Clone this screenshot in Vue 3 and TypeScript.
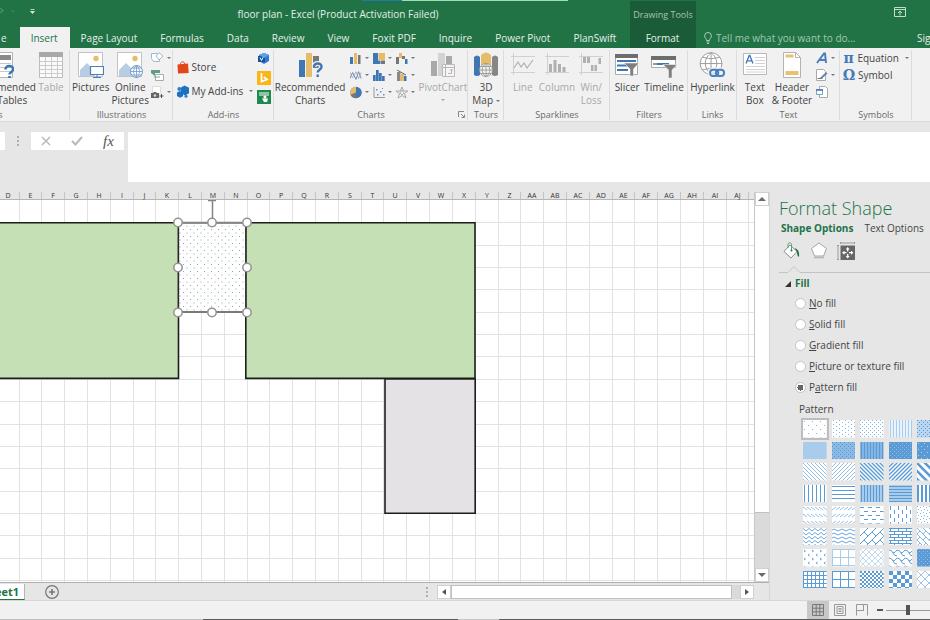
<script setup lang="ts">
import { ref } from 'vue'

interface Swatch {
  name: string
  w: number
  h: number
  d?: string
  fill?: string
  bg?: string
  sw?: number
  ink?: string
}

const tabs: string[] = ['Page Layout', 'Formulas', 'Data', 'Review', 'View', 'Foxit PDF', 'Inquire', 'Power Pivot', 'PlanSwift']

// Sheet geometry: column and row edges snapped to whole pixels
const columnNames: string[] = [
  ...'DEFGHIJKLMNOPQRSTUVWXYZ'.split(''),
  ...'ABCDEFGHIJ'.split('').map((c) => 'A' + c),
]
const edge = (i: number): number => Math.round(-3.3 + i * 22.81)
const columns = columnNames.map((name, i) => ({ name, width: edge(i + 1) - edge(i), right: edge(i + 1) }))
const rowLines: number[] = Array.from({ length: 17 }, (_, i) => Math.round(22.3 + i * 22.36))
const handles: number[][] = [[178, 22], [212, 22], [247, 22], [178, 67], [247, 67], [178, 112], [212, 112], [247, 112]]

const fills = [
  { id: 'none', pre: '', key: 'N', rest: 'o fill' },
  { id: 'solid', pre: '', key: 'S', rest: 'olid fill' },
  { id: 'gradient', pre: '', key: 'G', rest: 'radient fill' },
  { id: 'picture', pre: '', key: 'P', rest: 'icture or texture fill' },
  { id: 'pattern', pre: 'P', key: 'a', rest: 'ttern fill' },
]
const fill = ref('pattern')
const formula = ref('')
const query = ref('')
const zoomLevel = ref(50)
const selected = ref(0)

const B = '#5b9bd5'
const L = '#a9cbec'
const M = '#86b7e3'
const swatches: Swatch[] = [
  { name: '5%', w: 8, h: 8, fill: 'M1 1h1v1h-1zM5 5h1v1h-1z', ink: M },
  { name: '10%', w: 6, h: 4, fill: 'M1 0h1v1h-1zM4 2h1v1h-1z', ink: M },
  { name: '20%', w: 4, h: 4, fill: 'M0 0h1v1h-1zM2 2h1v1h-1z', ink: M },
  { name: '25%', w: 3, h: 2, bg: '#eaf3fb', fill: 'M1 0h1v1h-1zM1 1h1v1h-1z', ink: L },
  { name: '30%', w: 4, h: 4, bg: '#b9d5ef', fill: 'M0 0h1v1h-1zM2 2h1v1h-1z' },
  { name: '40%', w: 4, h: 4, bg: L },
  { name: '50%', w: 4, h: 4, bg: '#8ab9e4', fill: 'M0 0h1v1h-1zM2 2h1v1h-1z' },
  { name: '60%', w: 3, h: 2, bg: '#85b5e2', fill: 'M1 0h1v2h-1z' },
  { name: '70%', w: 4, h: 4, bg: B, fill: 'M1 1h1v1h-1zM3 3h1v1h-1z', ink: '#8fbce6' },
  { name: '75%', w: 6, h: 6, bg: B, fill: 'M1 1h1v1h-1zM4 4h1v1h-1z', ink: '#b5d3ef' },
  { name: 'Light downward diagonal', w: 4, h: 4, d: 'M-1 -1L5 5M-1 3L1 5M3 -1L5 1', sw: 0.9, ink: M },
  { name: 'Light upward diagonal', w: 4, h: 4, d: 'M-1 5L5 -1M-1 1L1 -1M3 5L5 3', sw: 0.9, ink: M },
  { name: 'Dark downward diagonal', w: 4, h: 4, d: 'M-1 -1L5 5M-1 3L1 5M3 -1L5 1', sw: 1.4 },
  { name: 'Dark upward diagonal', w: 4, h: 4, d: 'M-1 5L5 -1M-1 1L1 -1M3 5L5 3', sw: 1.4 },
  { name: 'Wide downward diagonal', w: 8, h: 8, d: 'M-2 -2L10 10M-2 6L2 10M6 -2L10 2', sw: 2.6 },
  { name: 'Light vertical', w: 4, h: 4, d: 'M1.5 0V4', sw: 1 },
  { name: 'Light horizontal', w: 4, h: 4, d: 'M0 1.5H4', sw: 1 },
  { name: 'Narrow vertical', w: 3, h: 3, bg: L, d: 'M1.5 0V3', sw: 1 },
  { name: 'Narrow horizontal', w: 3, h: 3, bg: L, d: 'M0 1.5H3', sw: 1 },
  { name: 'Dark vertical', w: 4, h: 4, d: 'M1 0V4', sw: 2 },
  { name: 'Dashed downward diagonal', w: 4, h: 7, d: 'M0 1L4 4', sw: 0.9, ink: M },
  { name: 'Dashed upward diagonal', w: 4, h: 7, d: 'M0 4L4 1', sw: 0.9, ink: M },
  { name: 'Dashed horizontal', w: 8, h: 8, d: 'M0 1.5H4M4 5.5H8', sw: 1 },
  { name: 'Dashed vertical', w: 8, h: 8, d: 'M1.5 0V4M5.5 4V8', sw: 1 },
  { name: 'Small confetti', w: 6, h: 6, fill: 'M0 0h1v1h-1zM3 1h1v1h-1zM1 3h1v1h-1zM4 4h1v1h-1z', ink: M },
  { name: 'Zig zag', w: 6, h: 4, d: 'M0 0.5L3 3L6 0.5', sw: 0.9 },
  { name: 'Wave', w: 8, h: 4, d: 'M0 2Q2 0 4 2T8 2', sw: 0.9 },
  { name: 'Diagonal brick', w: 8, h: 8, d: 'M-1 9L9 -1M-1 1L1 -1M7 9L9 7M4 4L8 8', sw: 1 },
  { name: 'Horizontal brick', w: 8, h: 6, d: 'M0 .5H8M0 3.5H8M1.5 0V3.5M5.5 3.5V6', sw: 1 },
  { name: 'Weave', w: 6, h: 6, d: 'M0 0L6 6M0 6L3 3M3 0L6 -3', sw: 1, ink: M },
  { name: 'Divot', w: 8, h: 8, d: 'M1 1L2.5 2L1 3M6.5 5L5 6L6.5 7', sw: 0.9 },
  { name: 'Dotted grid', w: 8, h: 8, d: 'M0 .5H8M.5 0V8', sw: 1, ink: L },
  { name: 'Dotted diamond', w: 6, h: 6, d: 'M0 0L6 6M6 0L0 6', sw: 0.7, ink: L },
  { name: 'Shingle', w: 8, h: 8, d: 'M0 1Q3 1 4 4T8 7M4 4Q6 4 8 1', sw: 1 },
  { name: 'Trellis', w: 4, h: 4, bg: B, fill: 'M0 0h1v1h-1zM2 2h1v1h-1z', ink: '#8fbce6' },
  { name: 'Small grid', w: 4, h: 4, d: 'M0 .5H4M.5 0V4', sw: 1 },
  { name: 'Large grid', w: 8, h: 8, d: 'M0 .5H8M.5 0V8', sw: 1 },
  { name: 'Small checker board', w: 4, h: 4, fill: 'M0 0h2v2h-2zM2 2h2v2h-2z' },
  { name: 'Large checker board', w: 8, h: 8, fill: 'M0 0h4v4h-4zM4 4h4v4h-4z' },
  { name: 'Outlined diamond', w: 8, h: 8, d: 'M0 0L8 8M8 0L0 8', sw: 0.8, ink: M },
]
</script>

<template>
  <div class="app">
    <div class="top-edge"><i class="te-blue"></i><i class="te-light"></i></div>
    <header class="head">
      <div class="head-main">
        <div class="title-row">
          <svg class="qat" width="40" height="12" viewBox="0 0 40 12" aria-hidden="true">
            <path d="M0 2l3 2.500-3 2.500" fill="none" stroke="#4c8a66" stroke-width="1.500" />
            <path d="M11 4.500h4l-2 2z" fill="#3f8460" />
            <path d="M30.500 3.500h4M30.500 5.500h4l-2 2z" stroke="#d6e8dd" stroke-width=".8" fill="#d6e8dd" />
          </svg>
          <h1>floor plan - Excel (Product Activation Failed)</h1>
        </div>
        <nav class="tabs">
          <a href="#home" class="tab tab-home">e</a>
          <a href="#insert" class="tab active">Insert</a>
          <a v-for="t in tabs" :key="t" :href="'#' + t" class="tab">{{ t }}</a>
        </nav>
      </div>
      <div class="context">
        <div class="context-title">Drawing Tools</div>
        <a href="#format" class="tab">Format</a>
      </div>
      <div class="head-right">
        <div class="window-row">
          <button class="plain" aria-label="Ribbon display options">
            <svg width="12" height="10" viewBox="0 0 12 10"><path d="M.5.5h11v9H.5zM.5 2.500h11M6 8.500V4.500M4 6l2-2 2 2" fill="none" stroke="#c4dccd" /></svg>
          </button>
        </div>
        <div class="tell-row">
          <svg width="8" height="12" viewBox="0 0 8 12" aria-hidden="true"><path d="M2.500 8.500C2.500 6.500.6 6 .6 3.900a3.400 3.400 0 0 1 6.800 0C7.400 6 5.500 6.500 5.500 8.500zM2.500 10h3M3 11.500h2" fill="none" stroke="#a9cdb8" /></svg>
          <input v-model="query" type="text" aria-label="Tell me" placeholder="Tell me what you want to do..." />
          <a href="#signin" class="signin">Sign in</a>
        </div>
      </div>
    </header>

    <section class="ribbon" aria-label="Insert">
      <div class="group g-tables">
        <div class="body">
          <button class="big">
            <svg width="26" height="26" viewBox="0 0 26 26"><path d="M2.500.5h22v25h-22z" fill="#fff" stroke="#b5b5b5" /><path d="M4 3h19v5H4z" fill="#8a8a8a" /><path d="M4 11.500h19M4 15.500h19M4 19.500h19M10 9v16" stroke="#c6c6c6" /><path d="M17.500 17.500c0-5 8-4.500 7.500 0 0 2.500-3.500 2.500-3.500 5M21.500 24v2" stroke="#3d76b8" stroke-width="2.600" fill="none" /></svg>
            <span>Recommended<br />PivotTables</span>
          </button>
          <button class="big off" disabled>
            <svg width="26" height="26" viewBox="0 0 26 26"><path d="M1.500.5h23v25h-23z" fill="#fafafa" stroke="#bdbdbd" /><path d="M1 0h24v5H1z" fill="#a9a9a9" /><path d="M2 9.500h22M2 13.500h22M2 17.500h22M2 21.500h22M7.500 5v20M13.500 5v20M19.500 5v20" stroke="#ccc" /></svg>
            <span>Table</span>
          </button>
        </div>
        <div class="name">Tables</div>
      </div>

      <div class="group g-ill">
        <div class="body">
          <button class="big">
            <svg width="26" height="26" viewBox="0 0 26 26"><path d="M.5.500h24v24H.5z" fill="#fff" stroke="#c2c2c2" /><circle cx="18" cy="6.500" r="2.700" fill="#e6bd6a" /><path d="M2 24v-6l7-7 8 8v5z" fill="#b7cde3" /><path d="M12.500 14.500h13v8h-13z" fill="#fff" stroke="#4a7ebb" stroke-width="1.200" /><path d="M19 23v2M15 25.500h8" stroke="#4a7ebb" /></svg>
            <span>Pictures</span>
          </button>
          <button class="big">
            <svg width="26" height="26" viewBox="0 0 26 26"><path d="M.5.500h24v24H.5z" fill="#fff" stroke="#c2c2c2" /><circle cx="18" cy="6.500" r="2.700" fill="#e6bd6a" /><path d="M2 24v-6l7-7 8 8v5z" fill="#b7cde3" /><circle cx="19.500" cy="19.500" r="6" fill="#fff" stroke="#6d98c9" /><path d="M13.500 19.500h12M19.500 13.500v12M19.500 13.500c-4 3-4 9 0 12M19.500 13.500c4 3 4 9 0 12M15 16h9M15 23h9" fill="none" stroke="#6d98c9" stroke-width=".8" /></svg>
            <span>Online<br />Pictures</span>
          </button>
          <div class="stack">
            <button class="small" aria-label="Shapes"><svg width="13" height="13" viewBox="0 0 13 13"><path d="M.5 1.500h6l2 3v5h-6l-2-3z" fill="#fff" stroke="#9fb9d3" /><path d="M8 .7l4 3.300-4 4-3-4z" fill="#fff" stroke="#9fb9d3" /></svg><i class="caret"></i></button>
            <button class="small" aria-label="SmartArt"><svg width="13" height="13" viewBox="0 0 13 13"><path d="M0 1h9v3H4v3L0 4z" fill="#5f9c83" /><path d="M4.500 5.500h8v6h-8z" fill="#fff" stroke="#aaa" /><path d="M3 8h6" stroke="#7aa" /></svg></button>
            <button class="small" aria-label="Screenshot"><svg width="13" height="13" viewBox="0 0 13 13"><path d="M1.500.5h8v7h-8z" fill="#fff" stroke="#ddd" /><path d="M0 7h2l1-1h2l1 1h2v5H0z" fill="#666" /><circle cx="4" cy="9.500" r="1.300" fill="#ddd" /><path d="M8.500 10h4M10.500 8v4" stroke="#555" /></svg><i class="caret"></i></button>
          </div>
        </div>
        <div class="name">Illustrations</div>
      </div>

      <div class="group g-add">
        <div class="body">
          <div class="stack wide">
            <button class="small text"><svg width="12" height="13" viewBox="0 0 12 13"><path d="M.5 3.500l10.500-1 .7 9.500L1 12.500z" fill="#e2471c" /><path d="M3.500 4V2.500C4 .5 7 .3 7.500 2.200v1.500" fill="none" stroke="#e2471c" /></svg>Store</button>
            <button class="small text"><svg width="12" height="13" viewBox="0 0 12 13"><path d="M4 2.500L7.500.5 12 2.800v5.400L8 10.500 4 8z" fill="#1b72c4" /><path d="M0 7.500l3-1.500L6 7.500v3.700L3 12.700 0 11z" fill="#1b72c4" /><circle cx="2.300" cy="4" r="1.900" fill="#2a80d0" /><circle cx="9" cy="11.300" r="1.500" fill="#2a80d0" /></svg>My Add-ins<i class="caret push"></i></button>
          </div>
          <div class="stack apps">
            <button class="small" aria-label="Visio Data Visualizer"><svg width="14" height="14" viewBox="0 0 14 14"><path d="M7 1l5 2v6l-5 3-5-3V3z" fill="#2f7bd3" /><path d="M1 4h7v6H1z" fill="#17509c" /><path d="M7 1l5 2-5 3-5-3z" fill="#5aa5ea" /><path d="M3 5.500L4.500 8.500 6 5.500" stroke="#fff" fill="none" /></svg></button>
            <button class="small" aria-label="Bing Maps"><svg width="14" height="14" viewBox="0 0 14 14"><path d="M0 0h14v14H0z" fill="#f9b616" /><path d="M4.500 2v8.500L10 8.500 6.800 6" fill="none" stroke="#fff" stroke-width="1.700" /></svg></button>
            <button class="small" aria-label="People Graph"><svg width="14" height="14" viewBox="0 0 14 14"><path d="M0 0h14v14H0z" fill="#1e8a4e" /><path d="M2 3h10M2 5h10" stroke="#fff" /><circle cx="8" cy="7" r="1.600" fill="#fff" /><path d="M5 8.500h6L10 12H7z" fill="#fff" /></svg></button>
          </div>
        </div>
        <div class="name">Add-ins</div>
      </div>

      <div class="group g-charts">
        <div class="body">
          <button class="big">
            <svg width="26" height="26" viewBox="0 0 26 26"><path d="M2 8h6v17H2z" fill="#3f77b4" /><path d="M9 1h6v24H9z" fill="#e7bc69" /><path d="M16 4h6v12h-6z" fill="#777" /><path d="M17 15c0-5 8-4.500 7.500 0 0 3-3.800 2.500-3.800 5.500M20.700 22.500v2.500" stroke="#f1f1f1" stroke-width="5" fill="none" /><path d="M17 15c0-5 8-4.500 7.500 0 0 3-3.800 2.500-3.800 5.500M20.700 22.500v2.500" stroke="#3d76b8" stroke-width="2.400" fill="none" /></svg>
            <span>Recommended<br />Charts</span>
          </button>
          <div class="chart-grid">
            <button class="small" aria-label="Column chart"><svg width="12" height="13" viewBox="0 0 12 13"><path d="M0 5h3v7H0z" fill="#3f77b4" /><path d="M4 1h3v11H4z" fill="#e7bc69" /><path d="M8 3h2.500v9H8z" fill="#777" /></svg><i class="caret"></i></button>
            <button class="small" aria-label="Hierarchy chart"><svg width="12" height="13" viewBox="0 0 12 13"><path d="M0 1h5v11H0z" fill="#3f77b4" /><path d="M5.500 1h6.500v7H5.500z" fill="#e7bc69" /><path d="M0 8.500h7V12H0z" fill="#3f77b4" /><path d="M7.500 8.500H12V12H7.500z" fill="#777" /></svg><i class="caret"></i></button>
            <button class="small" aria-label="Waterfall chart"><svg width="12" height="13" viewBox="0 0 12 13"><path d="M0 5h3v7H0z" fill="#777" /><path d="M3 1h3v5H3z" fill="#e7bc69" /><path d="M6 4h3v3H6z" fill="#777" /><path d="M9 7h2.500v5H9z" fill="#3f77b4" /></svg><i class="caret"></i></button>
            <button class="small" aria-label="Line chart"><svg width="12" height="13" viewBox="0 0 14 13"><path d="M0 10l3-7 4 8 3-9 3 8" fill="none" stroke="#4b80bb" /><path d="M0 3l3 6 4-7 3 8 3-7" fill="none" stroke="#999" stroke-width=".8" /></svg><i class="caret"></i></button>
            <button class="small" aria-label="Statistic chart"><svg width="12" height="13" viewBox="0 0 12 13"><path d="M0 6h2.700v6H0zM3 1h2.700v11H3zM6 4h2.700v8H6zM9 7h2.700v5H9z" fill="#3f77b4" /></svg><i class="caret"></i></button>
            <button class="small" aria-label="Combo chart"><svg width="12" height="13" viewBox="0 0 12 13"><path d="M1 3h3.500v9H1z" fill="#888" /><path d="M4.500 5h3.500v7H4.500z" fill="#e7bc69" /><path d="M8 7h2.500v5H8z" fill="#3f77b4" /><path d="M1 1l9 5" stroke="#666" /></svg><i class="caret"></i></button>
            <button class="small" aria-label="Pie chart"><svg width="12" height="13" viewBox="0 0 12 13"><circle cx="6" cy="6.500" r="5.800" fill="#3f77b4" /><path d="M6 6.500V.7A5.800 5.800 0 0 0 .7 9z" fill="#e7bc69" /><path d="M6 6.500L.7 9A5.800 5.800 0 0 0 6 12.300z" fill="#777" /></svg><i class="caret"></i></button>
            <button class="small" aria-label="Scatter chart"><svg width="12" height="13" viewBox="0 0 12 13"><path d="M1 1v10.500h11" fill="none" stroke="#999" /><path d="M3 3h1.500v1.500H3zM7 5h1.500v1.500H7zM4 8h1.500v1.500H4zM10 8h1.500v1.500H10zM9 2h1v1H9z" fill="#6b93bf" /></svg><i class="caret"></i></button>
            <button class="small" aria-label="Radar chart"><svg width="12" height="13" viewBox="0 0 12 13"><path d="M6 1l1.600 4H12L8.500 7.500 10 12 6 9.500 2 12l1.500-4.500L0 5h4.400z" fill="none" stroke="#aaa" /><path d="M6 4l2 3-2 2-2-2z" fill="none" stroke="#999" stroke-width=".7" /></svg><i class="caret"></i></button>
          </div>
          <button class="big off" disabled>
            <svg width="26" height="26" viewBox="0 0 26 26"><path d="M1 9h6v15H1z" fill="#a9a9a9" /><path d="M8 1h7v23H8z" fill="#d3d3d3" /><path d="M16 4h6v9h-6z" fill="#a9a9a9" /><path d="M12.500 12.500h12v12h-12z" fill="#f6f4f6" stroke="#bdb8bd" /><path d="M13 15.500h11M15.500 13v11M18 21.500h3.500v-4M20 18.500l1.500-1.500 1.500 1.500" fill="none" stroke="#b8b3b8" /></svg>
            <span>PivotChart<i class="caret under"></i></span>
          </button>
        </div>
        <div class="name">Charts<svg class="launcher" width="7" height="7" viewBox="0 0 7 7" aria-hidden="true"><path d="M.5 6V.5H6M3 3l3 3M6.500 3.500v3h-3" fill="none" stroke="#888" /></svg></div>
      </div>

      <div class="group g-tours">
        <div class="body">
          <button class="big">
            <svg width="26" height="26" viewBox="0 0 26 26"><path d="M1 5q3-3 6 0v18q-3 2-6 0z" fill="#3f77b4" /><path d="M8 3q5-5 10 0v20H8z" fill="#e7bc69" /><path d="M19 5q3-3 6 0v18q-3 2-6 0z" fill="#868686" /><circle cx="13" cy="18" r="6.500" fill="#f5f5f5" stroke="#8f8f8f" stroke-width=".8" /><path d="M6.500 18h13M13 11.500v13M13 11.500c-5 3-5 10 0 13M13 11.500c5 3 5 10 0 13M8 14.500h10M8 21.500h10" fill="none" stroke="#8f8f8f" stroke-width=".8" /></svg>
            <span>3D<br />Map <i class="caret inl"></i></span>
          </button>
        </div>
        <div class="name">Tours</div>
      </div>

      <div class="group g-spark">
        <div class="body gap4">
          <button class="big off" disabled>
            <svg width="24" height="26" viewBox="0 0 24 26"><path d="M2.500 1v22M0 4.500h24M0 20.500h24" stroke="#d0d0d0" /><path d="M3 16l4-6 3 5 3-4 3 5 6-8" fill="none" stroke="#b0b0b0" stroke-width="1.200" /></svg>
            <span>Line</span>
          </button>
          <button class="big off" disabled>
            <svg width="24" height="26" viewBox="0 0 24 26"><path d="M2.500 1v22M0 4.500h24M0 20.500h24" stroke="#d0d0d0" /><path d="M4 12h3v8H4zM8.500 8h3v12h-3zM13 12h3v8h-3zM17.500 15h3v5h-3z" fill="#b0b0b0" /></svg>
            <span>Column</span>
          </button>
          <button class="big off" disabled>
            <svg width="24" height="26" viewBox="0 0 24 26"><path d="M2.500 1v22M0 4.500h24M0 20.500h24" stroke="#d0d0d0" /><path d="M4 5h3v6H4zM8 5h3v6H8zM12 13h2.500v6H12zM15.500 13H18v6h-2.500zM19.500 6H22v6h-2.500z" fill="#b0b0b0" /></svg>
            <span>Win/<br />Loss</span>
          </button>
        </div>
        <div class="name">Sparklines</div>
      </div>

      <div class="group g-filters">
        <div class="body gap4">
          <button class="big">
            <svg width="26" height="26" viewBox="0 0 26 26"><path d="M1.500 2.500h22v20h-22z" fill="#fff" stroke="#aaa" /><path d="M1 2h23v4H1z" fill="#6d6d6d" /><path d="M3 9h19M3 13.500h11M3 18h11" stroke="#3f77b4" stroke-width="2" /><path d="M10 11h15l-5.500 6v7h-3.500v-7z" fill="#7f7f7f" stroke="#f1f1f1" stroke-width=".6" /></svg>
            <span>Slicer</span>
          </button>
          <button class="big">
            <svg width="26" height="26" viewBox="0 0 26 26"><path d="M.5 4.500h24v11H.5z" fill="#fff" stroke="#aaa" /><path d="M0 4h25v4H0z" fill="#6d6d6d" /><path d="M2 12h6" stroke="#999" stroke-width="2" /><path d="M6 12h12" stroke="#3f77b4" stroke-width="2" /><path d="M12 12.500h14l-5 5.500v8h-3.500v-8z" fill="#7f7f7f" stroke="#f1f1f1" stroke-width=".6" /></svg>
            <span>Timeline</span>
          </button>
        </div>
        <div class="name">Filters</div>
      </div>

      <div class="group g-links">
        <div class="body">
          <button class="big">
            <svg width="27" height="27" viewBox="0 0 27 27"><circle cx="12" cy="12" r="11.300" fill="#fff" stroke="#9a9a9a" /><path d="M.7 12h22.600M12 .7v22.600M12 .7c-8 6-8 16 0 22.600M12 .7c8 6 8 16 0 22.600M3 5.500q9 3 18 0M3 18.500q9-3 18 0" fill="none" stroke="#9a9a9a" /><rect x="11" y="18.500" width="14.500" height="6.500" rx="3.200" fill="none" stroke="#f1f1f1" stroke-width="5" /><rect x="11" y="18.500" width="8.500" height="6.500" rx="3.200" fill="none" stroke="#4a80bd" stroke-width="2" /><rect x="17" y="18.500" width="8.500" height="6.500" rx="3.200" fill="none" stroke="#4a80bd" stroke-width="2" /></svg>
            <span>Hyperlink</span>
          </button>
        </div>
        <div class="name">Links</div>
      </div>

      <div class="group g-text">
        <div class="body gap4">
          <button class="big">
            <svg width="26" height="26" viewBox="0 0 26 26"><path d="M1.500 1.500h23v21h-23z" fill="#fff" stroke="#b9b9b9" /><path d="M4 11.500L7.200 3.500h.6l3.200 8M5.200 8.800h4.600" fill="none" stroke="#3f77b4" stroke-width="1.300" /><path d="M13 5.500h10M13 8.500h10M13 11.500h10M4 14.500h19M4 17.500h19M4 20h19" stroke="#d2d2d2" /></svg>
            <span>Text<br />Box</span>
          </button>
          <button class="big">
            <svg width="20" height="26" viewBox="0 0 20 26"><path d="M1.500.5h12l5 5v20h-17z" fill="#fff" stroke="#b3b3b3" /><path d="M13.500.5v5h5" fill="none" stroke="#b3b3b3" /><path d="M3.500 2.500h8v3h-8zM3.500 19h13v4h-13z" fill="#e9bf70" /></svg>
            <span>Header<br />&amp; Footer</span>
          </button>
          <div class="stack">
            <button class="small" aria-label="WordArt"><svg width="12" height="12" viewBox="0 0 12 12"><path d="M1 11L8 1.500h1L10 11M3.500 8h6" fill="none" stroke="#4a7fbd" stroke-width="2" /></svg><i class="caret"></i></button>
            <button class="small" aria-label="Signature line"><svg width="12" height="12" viewBox="0 0 12 12"><path d="M.5.5h7l2 2v9h-9z" fill="#fff" stroke="#aaa" /><path d="M4 9l6-6 1.500 1.500-6 5.500z" fill="#5a85b5" /><path d="M1.500 9.500h5" stroke="#777" /></svg><i class="caret"></i></button>
            <button class="small" aria-label="Object"><svg width="12" height="12" viewBox="0 0 12 12"><path d="M3.500.5h6l2 2v9h-8z" fill="#fff" stroke="#aaa" /><path d="M.5 3.500h6v5h-6z" fill="#fff" stroke="#7b9fc6" /><path d="M0 4h7" stroke="#3f77b4" stroke-width="1.500" /></svg></button>
          </div>
        </div>
        <div class="name">Text</div>
      </div>

      <div class="group g-sym">
        <div class="body">
          <div class="stack sym">
            <button class="small text"><b class="glyph">π</b>Equation<i class="caret push"></i></button>
            <button class="small text"><b class="glyph">Ω</b>Symbol</button>
          </div>
        </div>
        <div class="name">Symbols</div>
      </div>
    </section>

    <section class="formula-bar">
      <div class="name-box"></div>
      <div class="grip"><i></i><i></i><i></i></div>
      <div class="fx">
        <button class="plain" aria-label="Cancel"><svg width="10" height="10" viewBox="0 0 10 10"><path d="M1 1l8 8M9 1L1 9" stroke="#b9b9b9" stroke-width="1.500" /></svg></button>
        <button class="plain" aria-label="Enter"><svg width="12" height="10" viewBox="0 0 12 10"><path d="M1 5l3.500 3.500L11 1" fill="none" stroke="#b9b9b9" stroke-width="2" /></svg></button>
        <button class="plain fx-label"><i>fx</i></button>
      </div>
      <textarea v-model="formula" aria-label="Formula"></textarea>
    </section>

    <main class="work">
      <div class="book">
        <div class="sheet-row">
          <div class="sheet">
            <div class="cols">
              <span v-for="c in columns" :key="c.name" class="col" :style="{ width: c.width + 'px' }">{{ c.name }}</span>
            </div>
            <svg class="canvas" role="img" aria-label="Floor plan">
              <defs>
                <pattern id="dots" width="7" height="7" patternUnits="userSpaceOnUse">
                  <path d="M1 1h1v1H1zM4.500 4.500h1v1h-1z" fill="#8fa3ad" />
                </pattern>
              </defs>
              <g stroke="#e2e2e2" shape-rendering="crispEdges">
                <line v-for="c in columns" :key="c.name" :x1="c.right - 0.5" :x2="c.right - 0.5" y1="0" y2="100%" />
                <line v-for="y in rowLines" :key="y" x1="0" x2="100%" :y1="y + 0.5" :y2="y + 0.5" />
              </g>
              <g stroke="#1c1e1b" stroke-width="1.600">
                <path d="M-5 22.800H178.500V178.400H-5z" fill="#c5e0b4" />
                <path d="M245.800 22.800H475V178.400H245.800z" fill="#c5e0b4" />
                <path d="M385 179H475.200V313.200H385z" fill="#e4e2e4" />
              </g>
              <path d="M178.500 22.800H245.800V112H178.500z" fill="#fff" />
              <path d="M178.500 22.800H245.800V112H178.500z" fill="url(#dots)" stroke="#2a2a2a" stroke-width="1.400" />
              <path d="M178 22.500H247M178 112H247M212.500 1V22M208 .5h8" fill="none" stroke="#858585" stroke-width="1.500" />
              <circle v-for="(p, i) in handles" :key="i" :cx="p[0]" :cy="p[1] + 0.5" r="4.200" fill="#fff" stroke="#929292" stroke-width="1.500" />
            </svg>
          </div>
          <div class="vscroll">
            <button class="arrow" aria-label="Scroll up"><svg width="8" height="4" viewBox="0 0 8 4"><path d="M0 4l4-4 4 4z" fill="#6b6b6b" /></svg></button>
            <div class="thumb"></div>
            <button class="arrow" aria-label="Scroll down"><svg width="8" height="4" viewBox="0 0 8 4"><path d="M0 0l4 4 4-4z" fill="#6b6b6b" /></svg></button>
          </div>
        </div>
        <div class="sheet-tabs">
          <a href="#sheet1" class="sheet-tab">Sheet1</a>
          <button class="plain add" aria-label="New sheet"><svg width="14" height="14" viewBox="0 0 14 14"><circle cx="7" cy="7" r="6.300" fill="none" stroke="#767676" stroke-width="1.200" /><path d="M7 4v6M4 7h6" stroke="#767676" stroke-width="1.600" /></svg></button>
          <div class="grip dark"><i></i><i></i><i></i></div>
          <div class="hscroll">
            <button class="arrow" aria-label="Scroll left"><svg width="4" height="6" viewBox="0 0 4 6"><path d="M4 0v6L0 3z" fill="#555" /></svg></button>
            <div class="thumb"></div>
            <button class="arrow" aria-label="Scroll right"><svg width="4" height="6" viewBox="0 0 4 6"><path d="M0 0v6l4-3z" fill="#555" /></svg></button>
          </div>
        </div>
      </div>

      <aside class="pane">
        <h2>Format Shape</h2>
        <div class="pane-tabs"><a href="#shape" class="on">Shape Options</a><a href="#text">Text Options</a></div>
        <div class="pane-icons">
          <button class="plain" aria-label="Fill and line"><svg width="18" height="18" viewBox="0 0 18 18"><path d="M7 3L14 9.500 8 16 1 9.500z" fill="#fff" stroke="#8a8a8a" /><path d="M5 6V2.500C5 .3 8.500.3 8.500 2.500V8" fill="none" stroke="#5b9c7a" /><circle cx="8.500" cy="8.500" r="1" fill="#217346" /><path d="M11.500 6q5.500 1.500 4.500 9-2-.5-2-5z" fill="#217346" /></svg></button>
          <button class="plain" aria-label="Effects"><svg width="18" height="18" viewBox="0 0 18 18"><path d="M9 1l7.500 5.500L13.500 14h-9L1.500 6.500z" fill="#fff" stroke="#a6a6a6" /><path d="M4 15.500h10" stroke="#b5b5b5" stroke-width="1.500" /></svg></button>
          <button class="plain" aria-label="Size and properties"><svg width="18" height="18" viewBox="0 0 18 18"><path d="M3.500 3.500H18V18H3.500z" fill="#666" /><path d="M1 3v15M0 3.500h2M0 17.500h2M3.500 1h14M3.500 0v2M17.500 0v2" stroke="#9a9a9a" /><path d="M10.700 7v2.500M10.700 12v2.500M7 10.700h2.500M12 10.700h2.500" stroke="#fff" stroke-width="1.300" /><path d="M8.700 7.500l2-2.500 2 2.500zM8.700 14l2 2.500 2-2.500zM7.500 8.700L5 10.700l2.500 2zM14 8.700l2.500 2-2.500 2z" fill="#fff" /></svg></button>
        </div>
        <svg class="notch" width="200" height="7" viewBox="0 0 200 7" aria-hidden="true"><path d="M0 6.500h9l6-6 6 6h179" fill="none" stroke="#c3c3c3" /></svg>
        <h3><svg width="6" height="6" viewBox="0 0 6 6" aria-hidden="true"><path d="M6 0v6H0z" fill="#333" /></svg>Fill</h3>
        <div class="radios" role="radiogroup" aria-label="Fill">
          <label v-for="f in fills" :key="f.id"><input v-model="fill" type="radio" name="fill" :value="f.id" /><span>{{ f.pre }}<u>{{ f.key }}</u>{{ f.rest }}</span></label>
        </div>
        <div class="pattern-label">Pattern</div>
        <div class="swatches">
          <button v-for="(s, i) in swatches" :key="s.name" class="swatch" :class="{ sel: selected === i }" :aria-label="s.name" @click="selected = i">
            <svg width="100%" height="100%">
              <defs>
                <pattern :id="'sw' + i" :width="s.w" :height="s.h" patternUnits="userSpaceOnUse">
                  <path v-if="s.fill" :d="s.fill" :fill="s.ink || B" />
                  <path v-if="s.d" :d="s.d" fill="none" :stroke="s.ink || B" :stroke-width="s.sw" />
                </pattern>
              </defs>
              <rect width="100%" height="100%" :fill="s.bg || '#fff'" />
              <rect width="100%" height="100%" :fill="'url(#sw' + i + ')'" />
            </svg>
          </button>
        </div>
      </aside>
    </main>

    <footer class="status">
      <button class="view on" aria-label="Normal"><svg width="12" height="12" viewBox="0 0 12 12"><path d="M.5.5h11v11H.5zM.5 4.200h11M.5 7.800h11M4.200.5v11M7.800.5v11" fill="none" stroke="#777" /></svg></button>
      <button class="view" aria-label="Page layout"><svg width="12" height="12" viewBox="0 0 12 12"><path d="M.5.500h11v11H.5zM3 2.500h6v7H3zM4.500 4.500h3M4.500 6h3M4.500 7.500h3" fill="none" stroke="#999" /></svg></button>
      <button class="view" aria-label="Page break preview"><svg width="12" height="12" viewBox="0 0 12 12"><path d="M.5 11.500V.5h11v11M.5 6.500h7v-6M7.500 3v4" fill="none" stroke="#999" /></svg></button>
      <button class="plain minus" aria-label="Zoom out"><svg width="6" height="2" viewBox="0 0 6 2"><path d="M0 0h6v2H0z" fill="#555" /></svg></button>
      <input v-model="zoomLevel" type="range" min="0" max="100" aria-label="Zoom" />
    </footer>
    <div class="bottom-edge"><i class="b1"></i><i class="b2"></i><i class="b3"></i><i class="b4"></i></div>
  </div>
</template>

<style>
body { margin: 0; overflow: hidden; }
</style>

<style scoped>
.app {
  display: flex;
  flex-direction: column;
  height: 100vh;
  background: #e6e6e6;
  color: #444;
  font: 10px/13px "Open Sans", "Noto Sans", sans-serif;
  overflow: hidden;
}
* { box-sizing: border-box; }
button, input, textarea { font: inherit; color: inherit; margin: 0; }
button { padding: 0; border: 0; background: none; }
a { color: inherit; text-decoration: none; }
h1, h2, h3 { margin: 0; font: inherit; }
svg { display: block; flex: none; }

.top-edge { display: flex; flex: none; height: 1px; background: #217346; }
.te-blue { width: 40px; margin-left: 362px; background: #1f7aa8; }
.te-light { width: 166px; background: #9fdcb8; }

.head { display: flex; flex: none; height: 47px; background: #217346; color: #e4efe8; }
.head-main { flex: 0 0 630px; min-width: 0; display: flex; flex-direction: column; }
.title-row { display: flex; align-items: center; height: 26px; }
.title-row h1 { flex: 1; text-align: center; padding-left: 6px; }
.qat { margin-top: -4px; }
.tabs { display: flex; height: 21px; }
.tab { display: flex; align-items: center; height: 21px; padding: 1px 12px 0 11px; white-space: nowrap; }
.tab-home { padding: 1px 13px 0 1px; }
.tab.active { background: #f1f1f1; color: #217346; }
.context { flex: 0 0 66px; display: flex; flex-direction: column; align-items: center; background: #1b5c38; }
.context-title { height: 26px; line-height: 27px; color: #a5c6b2; font-size: 9px; white-space: nowrap; }
.head-right { flex: 1; min-width: 0; display: flex; flex-direction: column; }
.window-row { display: flex; justify-content: flex-end; align-items: center; height: 22px; padding-right: 24px; }
.tell-row { display: flex; align-items: center; gap: 4px; height: 21px; margin-top: 4px; padding: 1px 0 0 8px; }
.tell-row input { flex: 0 0 160px; border: 0; background: none; padding: 0; }
.tell-row input::placeholder { color: #a0c8b0; opacity: 1; }
.signin { margin-left: 37px; white-space: nowrap; }

.ribbon { display: flex; flex: none; height: 73px; margin-left: -92px; background: #f1f1f1; }
.group { display: flex; flex-direction: column; flex: none; padding: 3px 0 0; position: relative; }
.group::after { content: ""; position: absolute; right: 0; top: 2px; bottom: 1px; width: 1px; background: #dcdcdc; }
.body { display: flex; justify-content: center; gap: 2px; height: 59px; }
.gap4 { gap: 4px; }
.name { text-align: center; color: #6a6a6a; font-size: 9px; line-height: 13px; position: relative; }
.launcher { position: absolute; right: 3px; top: 3px; }
.g-tables { width: 162px; }
.g-tables .body { justify-content: flex-end; padding-right: 6px; }
.g-ill { width: 103px; }
.g-add { width: 101px; }
.g-charts { width: 194px; }
.g-tours { width: 36px; }
.g-spark { width: 106px; }
.g-filters { width: 78px; }
.g-links { width: 49px; }
.g-text { width: 103px; }
.g-sym { width: 72px; }
.big { display: flex; flex-direction: column; align-items: center; gap: 3px; padding-top: 1px; text-align: center; white-space: nowrap; }
.big svg { height: 26px; }
.off { color: #a8a8a8; }
.caret { display: block; width: 0; height: 0; border: 2px solid transparent; border-top-color: #777; border-bottom: 0; }
.caret.under { margin: 5px auto 0; opacity: .6; }
.caret.inl { display: inline-block; vertical-align: 2px; }
.small { display: flex; align-items: center; gap: 3px; height: 14px; }
.stack { display: flex; flex-direction: column; gap: 3px; }
.text { gap: 3px; white-space: nowrap; }
.wide { width: 78px; gap: 10px; padding-top: 9px; }
.push { margin-left: 3px; }
.apps { gap: 5px; padding-top: 1px; }
.chart-grid { display: grid; grid-template-columns: 23px 23px 20px; grid-auto-rows: 14px; gap: 3px 0; padding-left: 3px; }
.sym { width: 66px; }
.glyph { width: 12px; color: #4479b8; font: bold 14px/14px "DejaVu Serif", serif; display: flex; justify-content: center; }

.formula-bar { display: flex; flex: none; align-items: flex-start; height: 71px; padding-top: 10px; border-top: 1px solid #dadada; }
.name-box { width: 5px; height: 18px; background: #fff; }
.grip { display: flex; flex-direction: column; justify-content: center; gap: 2px; width: 26px; height: 18px; align-items: center; }
.grip i { width: 2px; height: 2px; background: #b0b0b0; }
.fx { display: flex; align-items: center; justify-content: space-around; width: 93px; height: 18px; background: #fff; margin-right: 4px; }
.plain { display: flex; align-items: center; justify-content: center; }
.fx-label { font: italic 15px/16px "Liberation Serif", serif; color: #555; }
.formula-bar textarea { flex: 1; height: 50px; border: 0; background: #fff; resize: none; outline: 0; }

.work { display: flex; flex: 1; min-height: 0; }
.book { flex: 1; min-width: 0; display: flex; flex-direction: column; border-right: 1px solid #d6d6d6; }
.sheet-row { display: flex; flex: 1; min-height: 0; }
.sheet { flex: 1; min-width: 0; display: flex; flex-direction: column; overflow: hidden; }
.cols { display: flex; flex: none; height: 8px; margin-left: -3px; border-bottom: 1px solid #b5b5b5; }
.col { flex: none; border-right: 1px solid #c4c4c4; text-align: center; font-size: 7px; line-height: 7px; color: #333; }
.canvas { width: 100%; flex: 1; min-height: 0; background: #fff; }
.vscroll { display: flex; flex-direction: column; width: 15px; background: #dadada; border-left: 1px solid #c8c8c8; }
.arrow { display: flex; flex: none; align-items: center; justify-content: center; width: 14px; height: 14px; background: #fff; border: 1px solid #d0d0d0; }
.vscroll .thumb { flex: 1; background: #fff; margin-bottom: 55px; border-bottom: 1px solid #c0c0c0; }
.sheet-tabs { display: flex; flex: none; align-items: center; height: 18px; border-top: 1px solid #b0b0b0; }
.sheet-tab { display: flex; align-items: center; justify-content: flex-end; width: 25px; height: 16px; padding-right: 5px; background: #fff; color: #217346; font-weight: 700; font-size: 11px; border-bottom: 1px solid #217346; border-right: 1px solid #b5b5b5; }
.add { margin: 0 auto 0 20px; }
.grip.dark { width: 20px; height: 14px; }
.hscroll { display: flex; width: 317px; margin-right: 15px; background: #dadada; }
.hscroll .thumb { flex: 1; margin-right: 8px; background: #fff; border: 1px solid #c0c0c0; }

.pane { flex: 0 0 160px; padding: 6px 0 0 9px; overflow: hidden; }
.pane h2 { font-size: 18px; line-height: 20px; font-weight: 300; color: #217346; white-space: nowrap; }
.pane-tabs { display: flex; gap: 11px; padding-left: 2px; margin-top: 4px; white-space: nowrap; }
.pane-tabs .on { font-weight: 700; color: #217346; }
.pane-icons { display: flex; gap: 9px; padding-left: 4px; margin-top: 7px; }
.notch { margin-top: 6px; }
.pane h3 { display: flex; align-items: center; gap: 4px; padding-left: 6px; margin-top: 4px; font-weight: 700; color: #217346; }
.radios { display: flex; flex-direction: column; gap: 5px; margin: 5px 0 0 16px; }
.radios label { display: flex; align-items: center; gap: 3px; height: 16px; white-space: nowrap; }
.radios input { appearance: none; width: 11px; height: 11px; border: 1px solid #c4c4c4; border-radius: 50%; background: #fff; }
.radios input:checked { background: radial-gradient(circle, #666 0 3px, #fff 3px); }
.radios u { text-decoration-thickness: 1px; text-underline-offset: 1px; }
.pattern-label { margin: 8px 0 0 20px; }
.swatches { display: grid; grid-template-columns: repeat(5, 1fr); grid-template-rows: repeat(8, 1fr); gap: 4px 5px; width: 138px; height: 168px; margin: 4px 0 0 24px; }
.swatch { min-width: 0; min-height: 0; }
.swatch.sel { outline: 2px solid #bdbdbd; }

.status { display: flex; flex: none; align-items: center; justify-content: flex-end; height: 19px; background: #f1f1f1; border-top: 1px solid #d6d6d6; }
.view { display: flex; align-items: center; justify-content: center; width: 22px; height: 18px; }
.view.on { background: #c8c8c8; }
.minus { margin: 0 3px 0 4px; }
.status input { appearance: none; width: 44px; height: 12px; background: linear-gradient(#999, #999) center / 100% 1px no-repeat; }
.status input::-webkit-slider-thumb { appearance: none; width: 4px; height: 10px; background: #555; }
.bottom-edge { display: flex; flex: none; height: 1px; }
.b1 { width: 203px; background: #bdbdbd; }
.b2 { width: 255px; background: #5d5d5d; }
.b3 { width: 41px; background: #c4c4c4; }
.b4 { flex: 1; background: #5d5d5d; }
</style>
